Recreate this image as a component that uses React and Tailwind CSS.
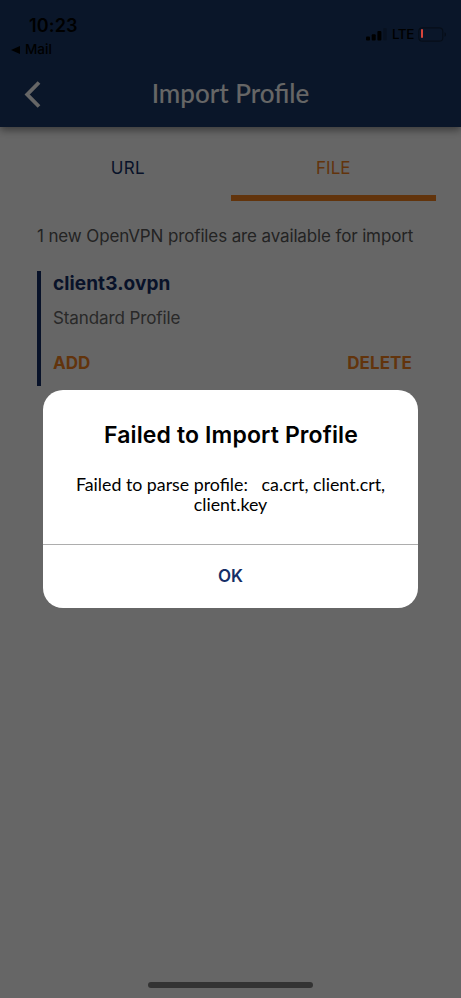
const StatusBar = () => (
  <div className="flex h-[62px] justify-between pt-[16px] pl-[11px] pr-[13px] text-black">
    <div>
      <div className="pl-[18px] text-[18px] font-semibold leading-[20px] tracking-[0.15px]">10:23</div>
      <div className="mt-[6px] flex items-center gap-[5px] text-[13.5px] font-medium leading-[15px]">
        <svg width="9" height="8" viewBox="0 0 9 8" fill="currentColor">
          <path d="M0 4 9 0v8z" />
        </svg>
        <span>Mail</span>
      </div>
    </div>

    <div className="mt-[10px] flex h-4 items-center">
      <svg width="21" height="13" viewBox="0 0 21 13" fill="currentColor">
        <rect x="0" y="8.5" width="4" height="4" rx="1" />
        <rect x="5.7" y="6.2" width="4" height="6.3" rx="1" />
        <rect x="11.4" y="3" width="4" height="9.5" rx="1" />
        <rect x="17.1" y="0" width="3.7" height="12.5" rx="1" opacity="0.2" />
      </svg>
      <span className="ml-[5px] w-[22px] text-[13.5px] font-medium leading-4 tracking-[-0.5px]">LTE</span>
      <svg className="ml-[4px] mr-px" width="29" height="15" viewBox="0 0 29 15" fill="none">
        <rect x="0.8" y="0.8" width="24" height="13.4" rx="3.5" stroke="#000" strokeOpacity="0.4" strokeWidth="1.2" />
        <path d="M26.5 5.2c2 .5 2 4.1 0 4.6z" fill="#000" fillOpacity="0.4" />
      </svg>
    </div>
  </div>
);

const Header = () => (
  <header className="h-[127px] bg-[#1a3866] shadow-[0_3px_8px_rgba(0,0,0,0.45)]">
    <StatusBar />
    <div className="flex h-[65px] items-center px-6">
      <svg width="17" height="27" viewBox="0 0 17 27" fill="none" stroke="#fff" strokeWidth="3.8">
        <path d="M15 1.5 3.2 13.5 15 25.5" />
      </svg>
      <h1 className="flex-1 pr-[17px] pb-[3px] text-center font-['Lato',sans-serif] text-[26px] font-medium leading-8 text-white">
        Import Profile
      </h1>
    </div>
  </header>
);

const Tabs = () => (
  <div className="mx-[25px] grid h-[74px] grid-cols-2 text-center text-[17px] leading-5">
    <div className="pt-[31px] tracking-[0.3px] text-[#152f67]">URL</div>
    <div className="border-b-[6px] border-[#f5821f] pt-[31px] text-[#f5821f]">FILE</div>
  </div>
);

const ProfileCard = () => (
  <div className="mt-[23px] ml-[37px] mr-[37px] h-[115px] border-l-4 border-[#152f67] pl-3 pr-[12px]">
    <h2 className="pt-[1px] text-[19px] font-bold leading-6 tracking-[0.1px] text-[#152f67]">client3.ovpn</h2>
    <p className="mt-[10px] text-[17px] leading-6 tracking-[-0.1px] text-[#666]">Standard Profile</p>
    <div className="mt-[23px] flex justify-between text-[17px] font-bold leading-5 text-[#f5821f]">
      <button>ADD</button>
      <button className="tracking-[0.1px]">DELETE</button>
    </div>
  </div>
);

const ErrorDialog = () => (
  <div className="h-[218px] w-[375px] overflow-hidden rounded-[20px] bg-white text-center text-black">
    <div className="h-[155px] border-b border-[#adadad] pt-[30px]">
      <h3 className="pl-px text-[23px] font-semibold leading-[30px] tracking-[0.13px]">Failed to Import Profile</h3>
      <p className="mt-[24px] whitespace-pre font-['Lato',sans-serif] text-[17.8px] leading-[20px]">
        {'Failed to parse profile:   ca.crt, client.crt,\nclient.key'}
      </p>
    </div>
    <button className="h-[63px] w-full pt-px text-[17px] font-semibold text-[#152f67]">OK</button>
  </div>
);

const App = () => (
  <div className="relative h-[998px] w-[461px] overflow-hidden bg-white font-['Inter',sans-serif]">
    <Header />
    <Tabs />
    <p className="mt-[23px] pl-[37px] text-[17px] leading-6 tracking-[-0.13px] text-[#595959]">
      1 new OpenVPN profiles are available for import
    </p>
    <ProfileCard />

    {/* Dimmed backdrop with the dialog */}
    <div className="absolute inset-0 flex items-center justify-center bg-black/60">
      <ErrorDialog />
    </div>

    {/* Low battery level and home indicator stay above the backdrop */}
    <div className="absolute left-[421px] top-[29px] h-[9px] w-[2px] rounded-sm bg-[#d8453b]" />
    <div className="absolute bottom-[10px] left-[148px] h-[6px] w-[165px] rounded-full bg-[#333]" />
  </div>
);

export default App;
